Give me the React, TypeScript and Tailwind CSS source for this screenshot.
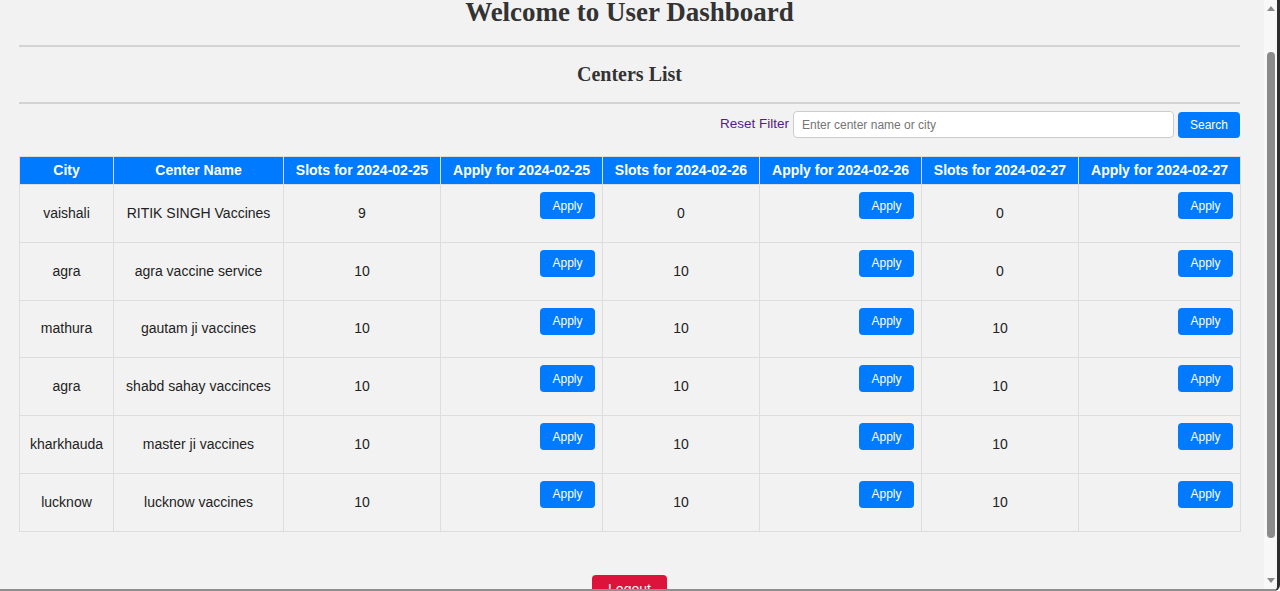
import React from "react";

type Center = {
  city: string;
  name: string;
  slots: [number, number, number];
};

const dates = ["2024-02-25", "2024-02-26", "2024-02-27"];

const centers: Center[] = [
  { city: "vaishali", name: "RITIK SINGH Vaccines", slots: [9, 0, 0] },
  { city: "agra", name: "agra vaccine service", slots: [10, 10, 0] },
  { city: "mathura", name: "gautam ji vaccines", slots: [10, 10, 10] },
  { city: "agra", name: "shabd sahay vaccinces", slots: [10, 10, 10] },
  { city: "kharkhauda", name: "master ji vaccines", slots: [10, 10, 10] },
  { city: "lucknow", name: "lucknow vaccines", slots: [10, 10, 10] },
];

const ApplyButton = () => (
  <button className="h-[27px] w-[55px] rounded-[4px] bg-[#007bff] text-[12px] text-white">
    Apply
  </button>
);

const CentersTable = () => {
  const th = "h-[28px] border border-[#ddd] bg-[#007bff] p-0 text-center text-[14px] font-bold text-white";
  const td = "h-[57.8px] border border-[#ddd] p-0 text-center align-middle text-[14px] text-[#222]";
  const tdApply = "h-[57.8px] border border-[#ddd] pt-[7px] pr-[7px] text-right align-top";

  return (
    <table className="w-[1221px] table-fixed border-collapse">
      <colgroup>
        <col className="w-[94px]" />
        <col className="w-[170px]" />
        <col className="w-[157px]" />
        <col className="w-[162px]" />
        <col className="w-[157px]" />
        <col className="w-[162px]" />
        <col className="w-[157px]" />
        <col className="w-[162px]" />
      </colgroup>
      <thead>
        <tr>
          <th className={th}>City</th>
          <th className={th}>Center Name</th>
          {dates.map((d) => (
            <React.Fragment key={d}>
              <th className={th}>Slots for {d}</th>
              <th className={th}>Apply for {d}</th>
            </React.Fragment>
          ))}
        </tr>
      </thead>
      <tbody>
        {centers.map((c, i) => (
          <tr key={i}>
            <td className={td}>{c.city}</td>
            <td className={td}>{c.name}</td>
            {c.slots.map((s, j) => (
              <React.Fragment key={j}>
                <td className={td}>{s}</td>
                <td className={tdApply}>
                  <ApplyButton />
                </td>
              </React.Fragment>
            ))}
          </tr>
        ))}
      </tbody>
    </table>
  );
};

const FakeScrollbar = () => (
  <div className="flex w-[13px] shrink-0 flex-col items-center bg-[#f8f8f8]">
    <div className="mt-[6px] h-0 w-0 border-x-[4px] border-b-[5px] border-x-transparent border-b-[#8a8a8a]" />
    <div className="mt-[41px] h-[486px] w-[8px] rounded-full bg-[#8b8b8b]" />
    <div className="mt-auto mb-[6px] h-0 w-0 border-x-[4px] border-t-[5px] border-x-transparent border-t-[#8a8a8a]" />
  </div>
);

export default function App() {
  return (
    <div className="flex h-[591px] flex-col overflow-hidden rounded-br-[6px] border-r-[3px] border-r-[#2e2e2e] bg-[#f2f2f2] font-['Liberation_Sans',Arial,sans-serif]">
      <div className="flex min-h-0 flex-1">
        <main className="block w-[1264px] shrink-0 overflow-hidden pl-[19px] pr-[24px]">
          <h1 className="mt-[-3px] text-center font-['Liberation_Serif','Times_New_Roman',serif] text-[27px] leading-[31px] font-bold text-[#333]">
            Welcome to User Dashboard
          </h1>
          <div className="mt-[17px] h-[2px] bg-[#d3d3d3]" />
          <h2 className="mt-[15px] text-center font-['Liberation_Serif','Times_New_Roman',serif] text-[20px] leading-[24px] font-bold text-[#333]">
            Centers List
          </h2>
          <div className="mt-[16px] h-[2px] bg-[#d3d3d3]" />

          <div className="mt-[7px] flex items-center justify-end gap-[4px]">
            <a href="#" className="text-[13.5px] text-[#551a8b]">
              Reset Filter
            </a>
            <input
              type="text"
              placeholder="Enter center name or city"
              className="h-[27px] w-[381px] rounded-[4px] border border-[#ccc] bg-white px-[8px] text-[12px] text-[#333] outline-none placeholder:text-[#757575]"
            />
            <button className="h-[26px] w-[62px] rounded-[4px] bg-[#007bff] text-[12px] text-white">
              Search
            </button>
          </div>

          <div className="mt-[18px]">
            <CentersTable />
          </div>

          <div className="mt-[43px] flex justify-center">
            <button className="w-[75px] rounded-[4px] bg-[#dc143c] py-[5px] text-[14px] leading-[18px] text-white">
              Logout
            </button>
          </div>
        </main>
        <FakeScrollbar />
      </div>
      <div className="h-[2px] shrink-0 bg-[#8f8f8f]" />
    </div>
  );
}
